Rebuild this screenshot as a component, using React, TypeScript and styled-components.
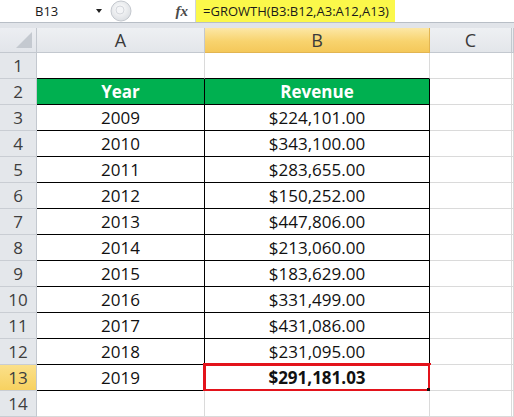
import React from "react";
import styled, { createGlobalStyle } from "styled-components";

const Global = createGlobalStyle`
  html, body { margin: 0; padding: 0; background: #ffffff; }
  body { font-family: "Open Sans", "Liberation Sans", sans-serif; }
`;

const Sheet = styled.div`
  width: 514px;
  height: 417px;
  overflow: hidden;
  display: flex;
  flex-direction: column;
  background: #fff;
`;

const FormulaBar = styled.div`
  height: 22px;
  display: flex;
  align-items: stretch;
  background: #fff;
  font-size: 13px;
  color: #1a1a1a;
`;

const NameBox = styled.div`
  width: 108px;
  display: flex;
  align-items: center;
  padding-left: 35px;
  box-sizing: border-box;
`;

const NameText = styled.span`
  flex: 1;
`;

const DropArrow = styled.span`
  width: 0;
  height: 0;
  border-left: 3px solid transparent;
  border-right: 3px solid transparent;
  border-top: 4px solid #222;
  margin-right: 6px;
`;

const Grip = styled.div`
  width: 24px;
  display: flex;
  align-items: center;
`;

const FxBox = styled.div`
  width: 64px;
  display: flex;
  align-items: center;
  justify-content: flex-end;
  padding-right: 7px;
  box-sizing: border-box;
  font-family: "Liberation Serif", "DejaVu Serif", serif;
  font-style: italic;
  font-weight: bold;
  font-size: 15px;
  color: #4a4a4a;
  border-right: 1px solid #d0d4da;
`;

const FormulaField = styled.div`
  flex: 1;
  display: flex;
  align-items: stretch;
`;

const Highlight = styled.span`
  background: #fbf84a;
  padding: 0 6px 0 7px;
  display: flex;
  align-items: center;
`;

const Band = styled.div`
  height: 6px;
  background: #e1e4e9;
  border-top: 1px solid #b8bec6;
  box-sizing: border-box;
`;

const Grid = styled.div`
  display: grid;
  grid-template-columns: 37px 168px 225px 82px 1fr;
  grid-template-rows: 25px repeat(14, 26px);
  font-size: 17px;
`;

const Corner = styled.div`
  background: linear-gradient(#eceef2, #e2e5ea);
  border-right: 1px solid #c3c8cf;
  border-bottom: 1px solid #c3c8cf;
  box-sizing: border-box;
  display: flex;
  justify-content: flex-end;
  align-items: flex-end;
  padding: 0 4px 4px 0;
`;

const Triangle = styled.div`
  width: 0;
  height: 0;
  border-left: 16px solid transparent;
  border-bottom: 16px solid #c4c9d0;
`;

const ColHead = styled.div<{ $active?: boolean }>`
  box-sizing: border-box;
  display: flex;
  align-items: center;
  justify-content: center;
  background: ${(p) =>
    p.$active
      ? "linear-gradient(#fce7a6, #f8d36e 55%, #f4c85a)"
      : "linear-gradient(#eef0f3, #e3e6ea)"};
  border-right: 1px solid ${(p) => (p.$active ? "#e2b552" : "#c3c8cf")};
  border-bottom: 1px solid ${(p) => (p.$active ? "#e2b552" : "#c3c8cf")};
  color: #3a3a3a;
  font-size: 18px;
`;

const RowHead = styled.div<{ $active?: boolean }>`
  box-sizing: border-box;
  display: flex;
  align-items: center;
  justify-content: center;
  background: ${(p) =>
    p.$active ? "linear-gradient(#fbe08a, #f7d160)" : "#e4e7eb"};
  border-right: 1px solid #c3c8cf;
  border-bottom: 1px solid #c9cdd3;
  color: #3e3e3e;
  font-size: 17px;
`;

const Cell = styled.div<{
  $header?: boolean;
  $boxed?: boolean;
  $topOfTable?: boolean;
  $bold?: boolean;
}>`
  box-sizing: border-box;
  position: relative;
  display: flex;
  align-items: center;
  justify-content: center;
  color: ${(p) => (p.$header ? "#fff" : "#111")};
  background: ${(p) => (p.$header ? "#00b050" : "#fff")};
  font-weight: ${(p) => (p.$header || p.$bold ? 700 : 400)};
  border-right: 1px solid ${(p) => (p.$boxed ? "#000" : "#dadada")};
  border-bottom: 1px solid
    ${(p) => (p.$boxed || p.$topOfTable ? "#000" : "#dadada")};
`;

const Selection = styled.div`
  position: absolute;
  left: -2px;
  top: -2px;
  right: -2px;
  bottom: -2px;
  border: 3px solid #e3131b;
  pointer-events: none;
`;

const FillHandle = styled.div`
  position: absolute;
  right: -5px;
  bottom: -5px;
  width: 6px;
  height: 6px;
  background: #111;
`;

const data: [string, string][] = [
  ["2009", "$224,101.00"],
  ["2010", "$343,100.00"],
  ["2011", "$283,655.00"],
  ["2012", "$150,252.00"],
  ["2013", "$447,806.00"],
  ["2014", "$213,060.00"],
  ["2015", "$183,629.00"],
  ["2016", "$331,499.00"],
  ["2017", "$431,086.00"],
  ["2018", "$231,095.00"],
  ["2019", "$291,181.03"],
];

export default function App() {
  const rows: React.ReactNode[] = [];
  for (let r = 1; r <= 14; r++) {
    const active = r === 13;
    rows.push(
      <RowHead key={`h${r}`} $active={active}>
        {r}
      </RowHead>
    );
    if (r === 1 || r === 14) {
      rows.push(<Cell key={`a${r}`} $topOfTable={r === 1} />);
      rows.push(<Cell key={`b${r}`} $topOfTable={r === 1} />);
    } else if (r === 2) {
      rows.push(
        <Cell key="a2" $header $boxed>
          Year
        </Cell>
      );
      rows.push(
        <Cell key="b2" $header $boxed>
          Revenue
        </Cell>
      );
    } else {
      const [y, v] = data[r - 3];
      rows.push(
        <Cell key={`a${r}`} $boxed>
          {y}
        </Cell>
      );
      rows.push(
        <Cell key={`b${r}`} $boxed $bold={active}>
          {v}
          {active && (
            <Selection>
              <FillHandle />
            </Selection>
          )}
        </Cell>
      );
    }
    rows.push(<Cell key={`c${r}`} />);
    rows.push(<Cell key={`d${r}`} />);
  }

  return (
    <Sheet>
      <Global />
      <FormulaBar>
        <NameBox>
          <NameText>B13</NameText>
          <DropArrow />
        </NameBox>
        <Grip>
          <svg width="24" height="22" viewBox="0 0 24 22">
            <defs>
              <radialGradient id="g" cx="0.45" cy="0.4" r="0.6">
                <stop offset="0" stopColor="#ffffff" />
                <stop offset="1" stopColor="#dcdfe3" />
              </radialGradient>
            </defs>
            <circle cx="13" cy="11" r="10" fill="url(#g)" stroke="#c4c8ce" />
            <circle cx="12" cy="10" r="4" fill="#f4f5f7" stroke="#d4d7dc" />
          </svg>
        </Grip>
        <FxBox>fx</FxBox>
        <FormulaField>
          <Highlight>=GROWTH(B3:B12,A3:A12,A13)</Highlight>
        </FormulaField>
      </FormulaBar>
      <Band />
      <Grid>
        <Corner>
          <Triangle />
        </Corner>
        <ColHead>A</ColHead>
        <ColHead $active>B</ColHead>
        <ColHead>C</ColHead>
        <ColHead />
        {rows}
      </Grid>
    </Sheet>
  );
}
